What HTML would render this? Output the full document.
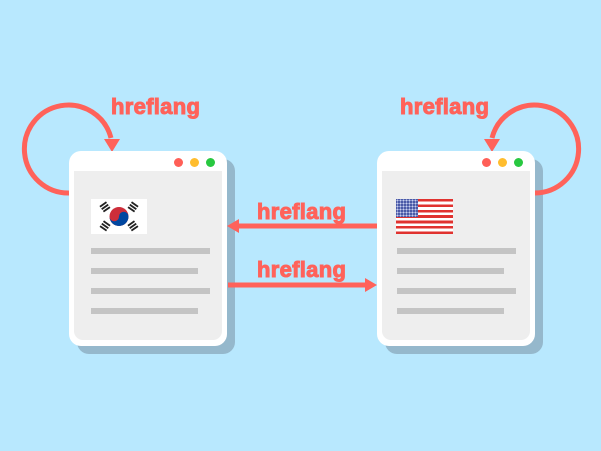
<!DOCTYPE html><html><head><style>
body{margin:0;width:601px;height:451px;background:#b8e8fe;position:relative;overflow:hidden;font-family:"Liberation Sans",sans-serif}
.a{position:absolute}
.t{position:absolute;color:#ff625a;font-weight:bold;font-size:22px;letter-spacing:0.3px;line-height:1;-webkit-text-stroke:1px #ff625a}
.win{position:absolute;width:158px;height:195px;background:#fff;border-radius:12px}
.sh{position:absolute;width:158px;height:195px;background:#95b8cc;border-radius:12px}
.in{position:absolute;left:5px;top:20px;width:148px;height:169px;background:#eeeeee;border-radius:0 0 9px 9px}
.d{position:absolute;top:7px;width:9px;height:9px;border-radius:50%}
.l{position:absolute;height:6px;background:#c4c4c4}
</style></head><body>
<div class="sh" style="left:77px;top:159px"></div>
<div class="sh" style="left:385px;top:159px"></div>
<svg class="a" style="left:0;top:0" width="601" height="451">
<g fill="none" stroke="#ff625a" stroke-width="5">
<path d="M69 193 A44 44 0 1 1 111 138"/>
<path d="M535 193 A44 44 0 1 0 492 138"/>
<path d="M377 226 H236"/>
<path d="M228 285 H368"/>
</g>
<g fill="#ff625a">
<path d="M104 139 L120 139 L112 152 Z"/>
<path d="M484 139 L500 139 L492 152 Z"/>
<path d="M227 226 L239 219 L239 233 Z"/>
<path d="M377 285 L365 278 L365 292 Z"/>
</g>
</svg>
<div class="win" style="left:69px;top:151px">
<div class="in"></div>
<div class="d" style="left:105px;background:#ff5f57"></div>
<div class="d" style="left:121px;background:#ffbd2e"></div>
<div class="d" style="left:137px;background:#28c840"></div>
<div class="a" style="left:22px;top:48px;width:56px;height:35px;background:#fff">
<svg width="56" height="35"><circle cx="28" cy="17.5" r="9.5" fill="#cd2e3a"/><path d="M18.5 17.5 A9.5 9.5 0 0 0 37.5 17.5 A4.75 4.75 0 0 0 28 17.5 A4.75 4.75 0 0 1 18.5 17.5Z" fill="#0047a0"/>
<g fill="#222">
<g transform="translate(14,8) rotate(-35)"><rect x="-4" y="-4" width="8" height="1.8"/><rect x="-4" y="-1" width="8" height="1.8"/><rect x="-4" y="2" width="8" height="1.8"/></g>
<g transform="translate(42,27) rotate(-35)"><rect x="-4" y="-4" width="8" height="1.8"/><rect x="-4" y="-1" width="8" height="1.8"/><rect x="-4" y="2" width="8" height="1.8"/></g>
<g transform="translate(42,8) rotate(35)"><rect x="-4" y="-4" width="8" height="1.8"/><rect x="-4" y="-1" width="8" height="1.8"/><rect x="-4" y="2" width="8" height="1.8"/></g>
<g transform="translate(14,27) rotate(35)"><rect x="-4" y="-4" width="8" height="1.8"/><rect x="-4" y="-1" width="8" height="1.8"/><rect x="-4" y="2" width="8" height="1.8"/></g>
</g></svg></div>
<div class="l" style="left:22px;top:97px;width:119px"></div>
<div class="l" style="left:22px;top:117px;width:107px"></div>
<div class="l" style="left:22px;top:137px;width:119px"></div>
<div class="l" style="left:22px;top:157px;width:107px"></div>
</div>
<div class="win" style="left:377px;top:151px">
<div class="in"></div>
<div class="d" style="left:105px;background:#ff5f57"></div>
<div class="d" style="left:121px;background:#ffbd2e"></div>
<div class="d" style="left:137px;background:#28c840"></div>
<div class="a" style="left:19px;top:48px;width:57px;height:35px;background:repeating-linear-gradient(#e0322f 0 2.7px,#fff 2.7px 5.4px)">
<div class="a" style="left:0;top:0;width:22px;height:18px;background:#4a5aa8;background-image:radial-gradient(#c8d0f0 0.8px,transparent 1px);background-size:3px 3px"></div></div>
<div class="l" style="left:20px;top:97px;width:119px"></div>
<div class="l" style="left:20px;top:117px;width:107px"></div>
<div class="l" style="left:20px;top:137px;width:119px"></div>
<div class="l" style="left:20px;top:157px;width:107px"></div>
</div>
<div class="t" style="left:111px;top:96px">hreflang</div>
<div class="t" style="left:400px;top:96px">hreflang</div>
<div class="t" style="left:257px;top:201px">hreflang</div>
<div class="t" style="left:257px;top:259px">hreflang</div>
</body></html>
